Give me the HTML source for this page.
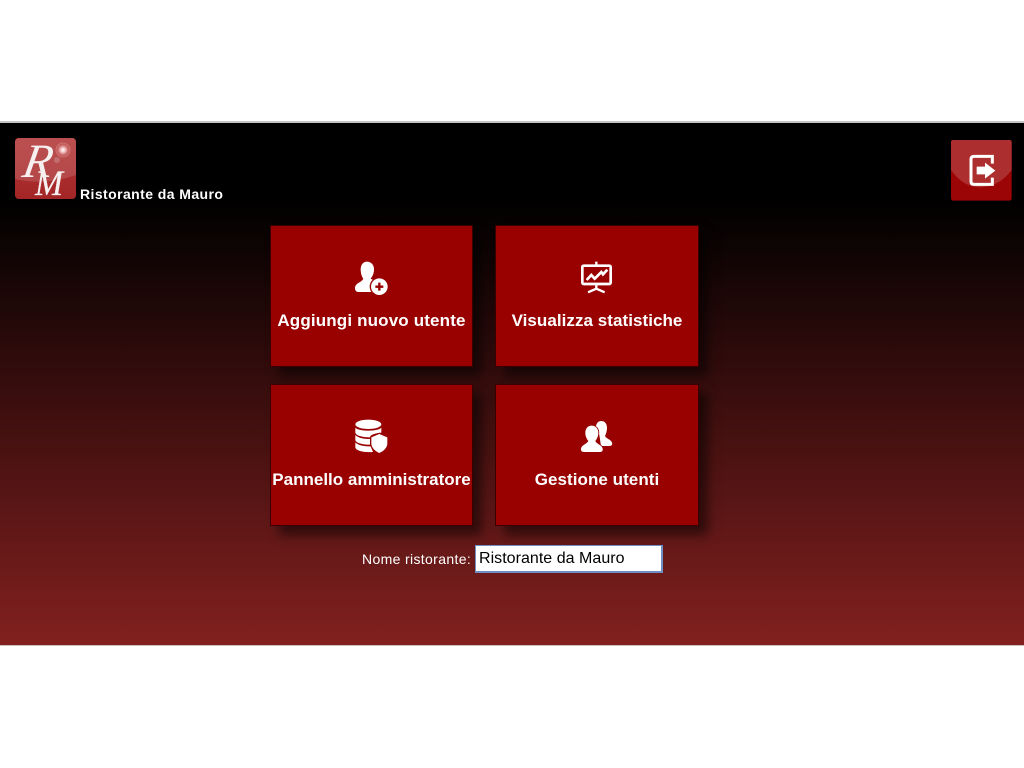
<!DOCTYPE html>
<html>
<head>
<meta charset="utf-8">
<style>
html,body{margin:0;padding:0;background:#fff;width:1024px;height:768px;overflow:hidden;font-family:"Liberation Sans",sans-serif}
#panel{position:absolute;left:0;top:123px;width:1024px;height:522px;background:linear-gradient(to bottom,#000 0,#000 77px,#82201f 100%);}
#lineT{position:absolute;left:0;top:121px;width:1024px;height:2px;background:#c4c4c4}
#lineB{position:absolute;left:0;top:645px;width:1024px;height:1px;background:#cfc0c0}
.tile{position:absolute;background:#990000;border:1px solid #3a0000;box-sizing:border-box;box-shadow:9px 9px 10px rgba(0,0,0,.5);color:#fff;font-weight:bold;font-size:17px;text-align:center}
.tile span{position:absolute;left:-10px;right:-10px;top:85px;line-height:20px;white-space:nowrap}
.ic{position:absolute;width:60px;height:50px}
#logo{position:absolute;left:15px;top:138px;width:61px;height:61px;border-radius:4px;overflow:hidden;background:#a82a2a}
#exit{position:absolute;left:930px;top:115px;width:94px;height:100px}
.a{position:absolute;color:#fff;white-space:nowrap}
#inp{position:absolute;left:475px;top:545px;width:188px;height:28px;box-sizing:border-box;background:#fff;border:1px solid #6f8fc4;border-width:1px 2px 2px 1px;color:#000;font-size:16px;line-height:25px;padding-left:3px;letter-spacing:.03px;white-space:nowrap}
</style>
</head>
<body>
<div id="lineT"></div>
<div id="panel"></div>
<div id="lineB"></div>

<div id="logo">
<svg width="61" height="61" viewBox="0 0 61 61">
<defs>
<radialGradient id="fl"><stop offset="0" stop-color="#fff"/><stop offset=".3" stop-color="#f4c8c8"/><stop offset=".75" stop-color="#d06a6a" stop-opacity=".6"/><stop offset="1" stop-color="#c05a5a" stop-opacity="0"/></radialGradient>
<linearGradient id="lg" x1="0" y1="0" x2="0" y2="1"><stop offset="0" stop-color="#b53a3a"/><stop offset="1" stop-color="#a32525"/></linearGradient>
</defs>
<rect width="61" height="61" fill="url(#lg)"/>
<path d="M0 0H61V37Q30 48 0 41Z" fill="#c46a6a" opacity=".45"/>
<circle cx="48" cy="12" r="7.500" fill="url(#fl)"/>
<circle cx="48" cy="12" r="7" fill="none" stroke="#dc8a8a" stroke-width=".8" opacity=".7"/>
<circle cx="42" cy="22" r="3" fill="#c98585" opacity=".6"/>
<text transform="translate(6 39) skewX(-10)" font-family="Liberation Serif,serif" font-style="italic" font-size="48" fill="#f6f0f0" textLength="29" lengthAdjust="spacingAndGlyphs">R</text>
<text x="20" y="57" font-family="Liberation Serif,serif" font-style="italic" font-size="36" fill="#f6f0f0" stroke="#f6f0f0" stroke-width=".3" textLength="28" lengthAdjust="spacingAndGlyphs">M</text>
</svg>
</div>
<div class="a" style="left:80px;top:186px;font-size:14px;font-weight:bold;line-height:16px;letter-spacing:.42px">Ristorante da Mauro</div>

<div id="exit">
<svg width="94" height="100" viewBox="0 0 282 300">
<rect x="63" y="75" width="182" height="182" rx="7" fill="#9c0505"/>
<path d="M63 82Q63 75 70 75H238Q245 75 245 82V165Q205 217 150 217Q100 217 63 165Z" fill="#ad2e2e"/>
<path d="M187 146V124H132Q123 124 123 133V199Q123 208 132 208H187V188" fill="none" stroke="#fff" stroke-width="9"/>
<path d="M140 155H165V143L196 167L165 191V178H140Z" fill="#fff"/>
</svg>
</div>

<div class="tile" style="left:270px;top:225px;width:203px;height:142px"><span style="letter-spacing:.15px">Aggiungi nuovo utente</span></div>
<div class="tile" style="left:495px;top:225px;width:204px;height:142px"><span style="letter-spacing:.05px">Visualizza statistiche</span></div>
<div class="tile" style="left:270px;top:384px;width:203px;height:142px"><span>Pannello amministratore</span></div>
<div class="tile" style="left:495px;top:384px;width:204px;height:142px"><span style="letter-spacing:.05px">Gestione utenti</span></div>

<svg class="ic" style="left:340px;top:250px" viewBox="0 0 180 150">
<path d="M81 35C69 35 62 45 62 58C62 71 66 80 70 87C64 97 47 99 45 112C44 122 50 126 56 126H108V92C100 90 94 88 92 86C98 78 102 70 102 57C102 45 93 35 81 35Z" fill="#fff"/>
<circle cx="118" cy="110" r="29" fill="#990000"/>
<circle cx="118" cy="110" r="25" fill="#fff"/>
<path d="M118 98V122M106 110H130" stroke="#990000" stroke-width="7"/>
</svg>

<svg class="ic" style="left:566px;top:250px" viewBox="0 0 180 150">
<path d="M91 35V45M91 103V120M91 116L66 127M91 116L116 127" stroke="#fff" stroke-width="7" fill="none"/>
<rect x="49" y="47" width="85" height="55" rx="4" fill="none" stroke="#fff" stroke-width="8"/>
<path d="M62 90L76 75L86 86L106 66L111 73L124 59" fill="none" stroke="#fff" stroke-width="8"/>
</svg>

<svg class="ic" style="left:340px;top:410px" viewBox="0 0 180 150">
<ellipse cx="85" cy="43" rx="39" ry="14" fill="#fff"/>
<path d="M46 53C55 65 115 65 124 53V68C110 70 92 72 90 82C70 82 50 78 46 69Z" fill="#fff"/>
<path d="M46 75C55 85 75 87 90 87V104C70 104 50 100 46 91Z" fill="#fff"/>
<path d="M46 97C55 107 75 109 92 109L99 126C75 128 50 124 46 113Z" fill="#fff"/>
<path d="M118 68L145 79V100C145 115 133 125 118 133C103 125 91 115 91 100V79Z" fill="#990000"/>
<path d="M118 72L142 82V100C142 113 131 123 118 129C105 123 94 113 94 100V82Z" fill="#fff"/>
</svg>

<svg class="ic" style="left:566px;top:410px" viewBox="0 0 180 150">
<path d="M106 33C95 33 90 42 90 52L100 75L105 108H130C137 108 140 104 138 98C135 88 120 86 117 78C120 73 123 63 123 53C123 42 117 33 106 33Z" fill="#fff"/>
<path id="f" d="M77 47C64 47 57 58 58 71C59 81 63 88 67 93C62 103 47 104 45 116C44 123 48 126 54 126H102C108 126 111 123 110 116C108 104 92 103 88 93C92 88 96 81 97 71C98 58 90 47 77 47Z" fill="#fff" stroke="#990000" stroke-width="5" paint-order="stroke"/>
</svg>

<div class="a" style="left:362px;top:551px;font-size:14px;line-height:16px;letter-spacing:.35px">Nome ristorante:</div>
<div id="inp">Ristorante da Mauro</div>
</body>
</html>
